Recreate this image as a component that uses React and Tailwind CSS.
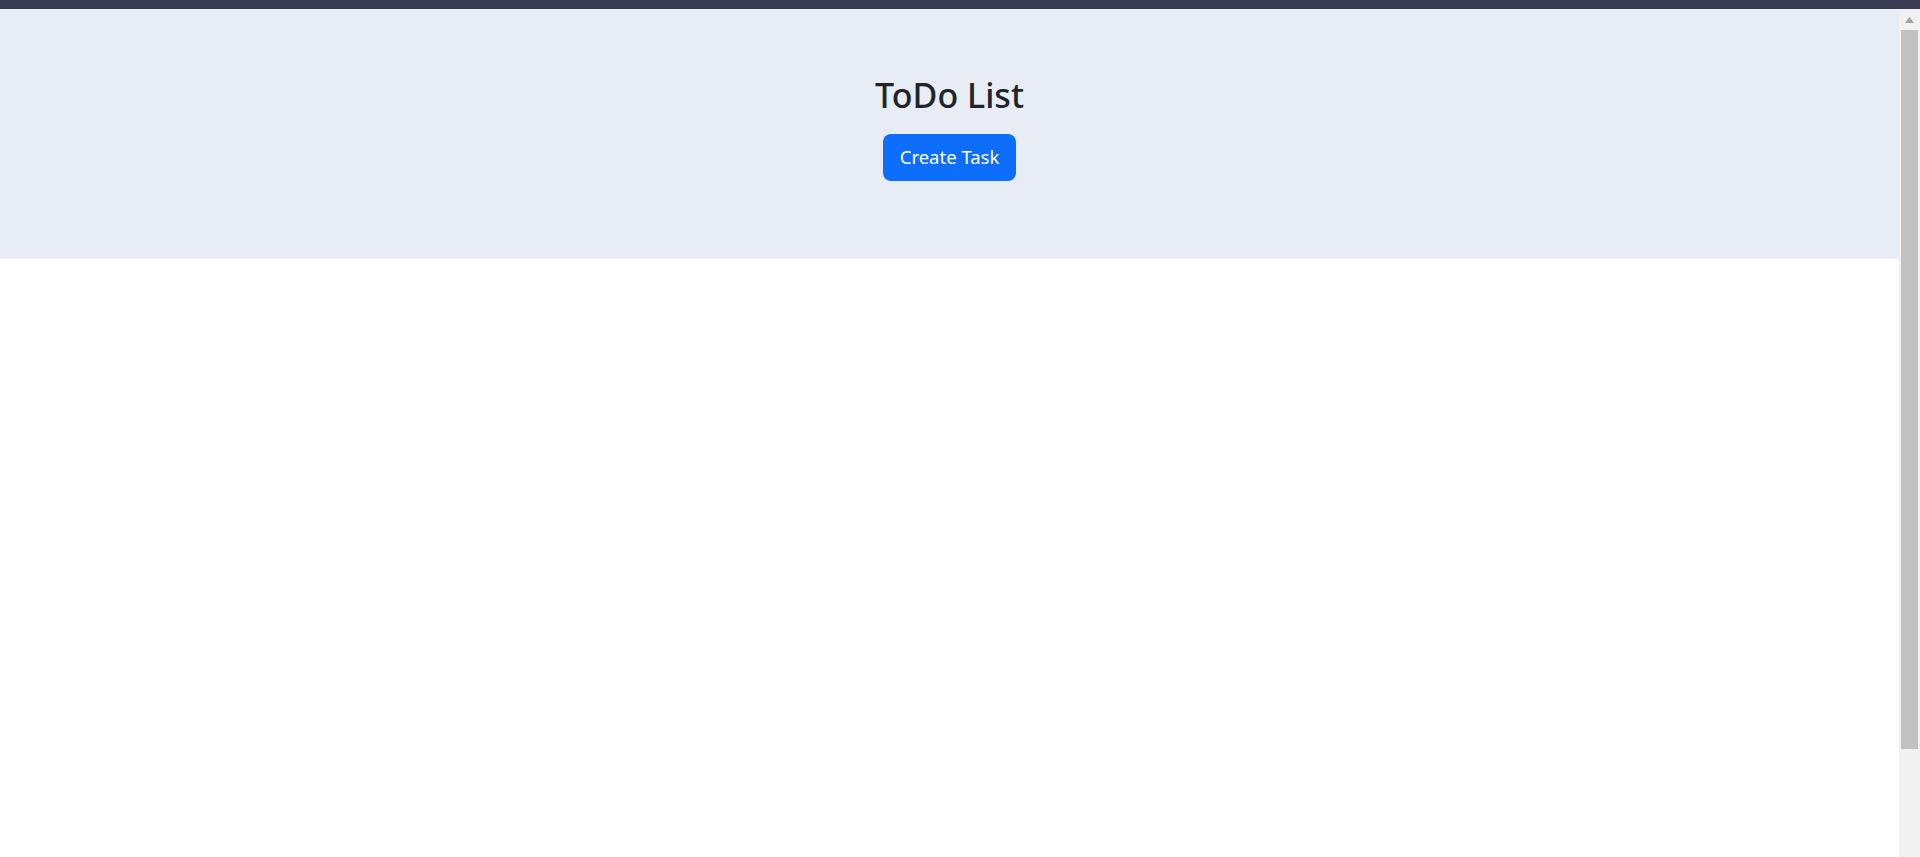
export default function App() {
  return (
    <div className="h-[857px] overflow-hidden bg-white font-['Noto_Sans',sans-serif]">
      <div className="h-[9px] bg-[#3a3d52]"></div>
      <div className="flex h-[848px]">
        <main className="flex-1">
          <header className="h-[250px] bg-[#e8ecf5] flex flex-col items-center pt-[66px]">
            <h1 className="text-[34px] leading-[1.2] font-medium text-[#212529]">ToDo List</h1>
            <button className="mt-[18px] h-[47px] px-[17px] rounded-lg bg-[#0d6efd] text-white text-[18.5px] leading-none">
              Create Task
            </button>
          </header>
        </main>
        <div className="w-[21px] bg-[#f1f1f1] flex flex-col items-center">
          <div className="h-[21px] flex items-center justify-center">
            <svg width="9" height="6" viewBox="0 0 9 6">
              <polygon points="4.5,0 9,6 0,6" fill="#a3a3a3" />
            </svg>
          </div>
          <div className="w-[17px] h-[719px] bg-[#c1c1c1]"></div>
        </div>
      </div>
    </div>
  );
}
